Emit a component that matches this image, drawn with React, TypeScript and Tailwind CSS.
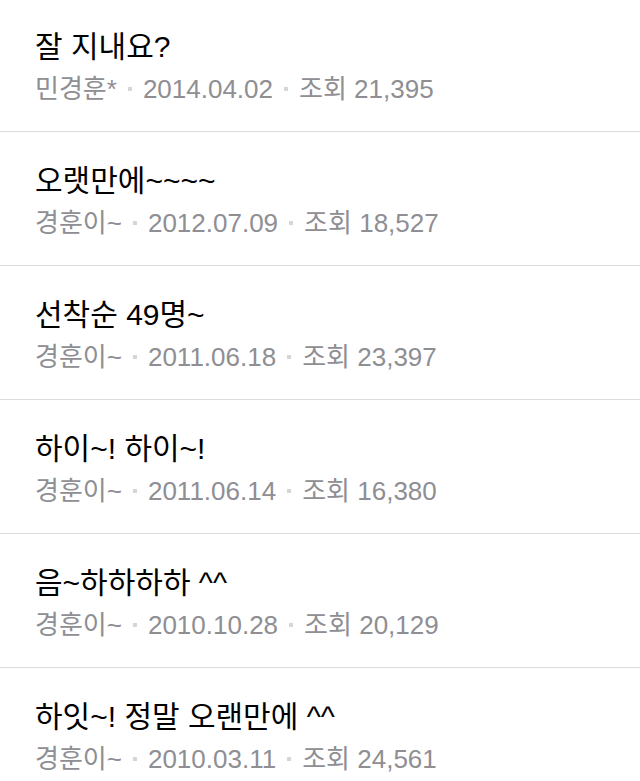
const POSTS = [
  { title: "잘 지내요?", author: "민경훈*", date: "2014.04.02", views: "21,395" },
  { title: "오랫만에~~~~", author: "경훈이~", date: "2012.07.09", views: "18,527" },
  { title: "선착순 49명~", author: "경훈이~", date: "2011.06.18", views: "23,397" },
  { title: "하이~! 하이~!", author: "경훈이~", date: "2011.06.14", views: "16,380" },
  { title: "음~하하하하 ^^", author: "경훈이~", date: "2010.10.28", views: "20,129" },
  { title: "하잇~! 정말 오랜만에 ^^", author: "경훈이~", date: "2010.03.11", views: "24,561" },
];

function Dot() {
  return <span className="mx-[11px] inline-block w-[4px] h-[4px] bg-[#d6d6da]" />;
}

export default function App() {
  return (
    <div
      className="w-[640px] h-[781px] overflow-hidden bg-white"
      style={{ fontFamily: '"Liberation Sans", "Noto Sans CJK KR", sans-serif' }}
    >
      <ul className="-mt-[2px]">
        {POSTS.map((p, i) => (
          <li key={i} className="border-b border-[#dcdcdc] pl-[35px] pt-[31px] pb-[26px]">
            <div className="text-[30px] leading-[36px] text-black">{p.title}</div>
            <div className="mt-[8px] flex items-center text-[26px] leading-[32px] text-[#8e8e93]">
              <span>{p.author}</span>
              <Dot />
              <span>{p.date}</span>
              <Dot />
              <span>조회 {p.views}</span>
            </div>
          </li>
        ))}
      </ul>
    </div>
  );
}
